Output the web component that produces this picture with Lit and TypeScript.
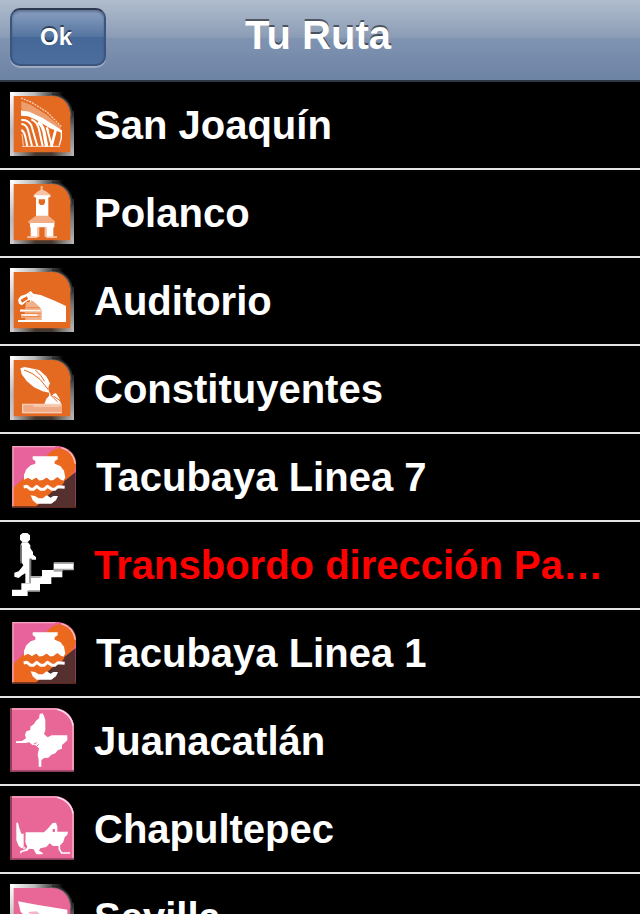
import { LitElement, html, css, svg, TemplateResult } from "lit";
import { customElement, state } from "lit/decorators.js";

type Stop = { name: string; icon: string; transfer?: boolean; wide?: boolean };

const STOPS: Stop[] = [
  { name: "San Joaquín", icon: "sanJoaquin" },
  { name: "Polanco", icon: "polanco" },
  { name: "Auditorio", icon: "auditorio" },
  { name: "Constituyentes", icon: "constituyentes" },
  { name: "Tacubaya Linea 7", icon: "tacubaya", wide: true },
  { name: "Transbordo dirección Pantitlán", icon: "stairs", transfer: true },
  { name: "Tacubaya Linea 1", icon: "tacubaya", wide: true },
  { name: "Juanacatlán", icon: "juanacatlan" },
  { name: "Chapultepec", icon: "chapultepec" },
  { name: "Sevilla", icon: "sevilla" },
];

/* Silver frame with one rounded corner, used by line 7 badges. */
const silverPlate = (fill: string) => svg`
  <path fill="url(#rim-right)" d="M206 80H222V216H206z"/>
  <path fill="url(#rim-base)" d="M30 203H222V216H30z"/>
  <path fill="url(#rim-top)" d="M30 24H190V38H30z"/>
  <path fill="url(#rim-side)" d="M30 24H42V216H30z"/>
  <path fill="none" stroke="#2a2a2a" stroke-width="10" d="M156 33C192 36 213 60 215 96"/>
  <path fill="none" stroke="#6a6460" stroke-width="4" d="M150 35C190 36 211 60 213 96"/>
  <path fill=${fill} d="M41 36H158C190 38 210 62 211 95V205H41z"/>`;

/* Flat pink plate with a light curved edge, used by line 1 badges. */
const pinkPlate = svg`
  <path fill="#e96797" d="M30 24H168C200 28 220 52 222 80V216H30z"/>
  <path fill="none" stroke="#f3a3c0" stroke-width="5" d="M36 27H166C198 31 217 54 219 80V212"/>
  <path fill="none" stroke="#fff" stroke-width="4" opacity=".7" d="M172 28C199 34 217 56 219 76"/>
  <path fill="#8c3f5e" d="M30 24H36V216H30zM30 211H222V216H30z"/>`;

const ICONS: Record<string, TemplateResult> = {
  sanJoaquin: svg`
    ${silverPlate("#e46a22")}
    <path fill="#fff" opacity=".35" d="M64 52L92 62L140 92L182 130V142L150 118L105 92L64 76z"/>
    <path fill="none" stroke="#fff" stroke-width="4" stroke-dasharray="6 3" opacity=".7" d="M63 42L95 55L142 85L186 130"/>
    <path fill="#fff" d="M63 79L88 83L128 102L160 122L184 138V146L150 133L108 107L84 97L63 95z"/>
    <g fill="none" stroke="#fff" stroke-width="6">
      <path d="M64 108Q84 106 94 124L112 186"/>
      <path d="M64 120Q78 120 84 138L96 186"/>
      <path d="M64 138Q72 142 76 158L82 186"/>
      <path d="M94 106Q110 112 116 132L128 186"/>
      <path stroke-width="10" d="M114 114Q128 124 132 144L140 188"/>
      <path d="M140 130L156 188"/>
      <path stroke-width="8" d="M168 134L154 188"/>
      <path stroke-width="4" d="M184 138V162L178 184"/>
      <path stroke-width="3" d="M66 187H180" opacity=".8"/>
      <path stroke-width="3" d="M146 134V150M66 150L70 184" opacity=".7"/>
    </g>`,
  polanco: svg`
    ${silverPlate("#e46a22")}
    <path fill="#f6c4a5" d="M122 42H128V53L138 58L152 69V76H101V69L114 58L122 53z"/>
    <path fill="#fff" d="M108 74H145V132H108zM104 70H149V76H104z"/>
    <path fill="#e46a22" d="M116 82H135V93L130 99H121L116 93z"/>
    <path fill="#f3ad86" d="M108 131H145L165 148V154H85V148z"/>
    <path fill="#fff" d="M90 153H163V166H160V195H139V166H113V195H92V166H90z"/>
    <path fill="#f6c4a5" d="M82 193H112V198H82zM139 193H171V198H139zM113 164H118V195H113zM134 164H139V195H134z"/>`,
  auditorio: svg`
    ${silverPlate("#e46a22")}
    <path fill="#fff" d="M54 119L62 108L78 103L92 93L100 101L122 105L166 123L198 138V186H54V180H124V150L104 128L92 119L82 122L66 136L57 131z"/>
    <path fill="#f3b18a" d="M78 127L98 124L112 134L124 148V180H76V174H64V163H74V156H60V147H76z"/>
    <path fill="#e46a22" d="M62 119L81 109L84 117L66 128z"/>
    <path fill="none" stroke="#e46a22" stroke-width="3" opacity=".6" d="M88 100L96 110M80 143H120M64 160H122M66 170H122"/>
    <path fill="none" stroke="#fff" stroke-width="4" d="M60 152H122M64 165H112M92 98V126"/>`,
  constituyentes: svg`
    ${silverPlate("#e46a22")}
    <path fill="#fff" d="M61 61L74 57L92 61L118 66L140 86L150 106L145 118L148 134L128 130L102 118L80 99L65 79z"/>
    <path fill="none" stroke="#e46a22" stroke-width="3" d="M72 66L96 76L120 94L146 126M106 66L122 82L134 100"/>
    <path fill="#fff" d="M148 131L155 145L161 137L168 136L178 151L183 168H133L139 152L147 144z"/>
    <path fill="none" stroke="#e46a22" stroke-width="3" d="M151 140L172 161M160 144L180 158"/>
    <path fill="#f0aa86" d="M66 168H186V196H66z"/>
    <path fill="none" stroke="#f7ceb6" stroke-width="4" d="M68 195V169H184M68 194H185M102 170V174H182"/>`,
  tacubaya: svg`
    <path fill="#e8629b" d="M37 30H176C204 34 224 52 228 76V214H37z"/>
    <path fill="#ec681f" d="M37 158L100 98L154 46C166 36 180 35 192 42C215 52 227 70 227 92C224 110 212 122 202 130L112 214H37z"/>
    <path fill="#56302f" d="M227 108V214H106L132 190L178 146L202 128z"/>
    <path fill="none" stroke="#f6a6c6" stroke-width="4" d="M39 212V32H166"/>
    <path fill="none" stroke="#fbc5a4" stroke-width="4" d="M184 35C208 42 222 58 226 84"/>
    <path fill="none" stroke="#5f2d24" stroke-width="4" d="M38 213H228"/>
    <path fill="#fff" d="M98 61H173V70L164 76V83L181 90L192 104L196 125L190 134L181 132L172 124L160 133L151 134L140 125L128 133L118 134L108 125L96 133L83 126L72 131V116L79 100L92 88L106 83V75L98 70z"/>
    <path fill="#ec681f" d="M76 132L84 126L96 133L108 125L118 134L128 133L140 125L151 134L160 133L172 124L184 132L194 137L184 151L172 148L160 158L142 148L128 159L108 148L94 158L76 149z"/>
    <path fill="none" stroke="#fff" stroke-width="9" stroke-linejoin="round" d="M71 153L81 151L92 160H100L110 151L122 160H132L142 151L156 160H164L174 152L194 154"/>
    <path fill="#fff" d="M92 178L105 180L116 187H128L140 178L152 185L160 180L174 180L168 193L154 203H110L98 193z"/>`,
  stairs: svg`
    <path fill="#fff" d="M68 27H82L90 34V47L82 55H68L60 47V34z"/>
    <path fill="#fff" d="M66 55H84L91 64V73L99 84V92L108 99V107H96L91 102V178H76V148L66 154L56 162L43 158V146L56 142L64 132L70 124L62 110V62z"/>
    <path fill="#777" d="M61 62H66V118H61zM88 104H94V176H88z"/>
    <path fill="#fff" d="M36 197H64V178H92V157H126V138H161V116H221V138H187V160H154V180H120V200H83V216H36z"/>
    <path fill="#aaa" d="M162 115H221V120H162zM161 134H221V139H187V143H161zM92 157H122V162H92zM84 198H120V203H84z"/>`,
  juanacatlan: svg`
    ${pinkPlate}
    <path fill="#fff" d="M119 42L128 40L132 48L136 60V91L132 102L143 112L155 106H202V121L194 128L186 135V146L174 150L166 160L154 164L145 173L132 174L124 181V200H116V180L113 164L117 145L106 136L96 134L88 127L76 129H48V124L66 123L78 115L75 104L79 94L91 90V80L102 72L108 62L117 55z"/>
    <path fill="none" stroke="#e96797" stroke-width="3" d="M102 132L110 128M109 140L116 133"/>`,
  chapultepec: svg`
    ${pinkPlate}
    <path fill="#fff" d="M49 104H54L58 120L64 137H71V178L65 181L56 174L49 157zM77 133H132L143 122L158 105L168 104L172 116V131H204L202 140L194 148L190 162L178 174H159L149 166L139 177L121 181L117 188L128 194V199H109L101 184L88 182L82 188L66 192L62 198L60 190L76 184L82 177L76 162z"/>
    <path fill="#e96797" d="M158 123H165V132H158z"/>
    <path fill="none" stroke="#fff" stroke-width="5" d="M178 168V184L185 195H210M75 178L70 182"/>`,
  sevilla: svg`
    ${silverPlate("#e96797")}
    <path fill="#fff" d="M54 76L110 86L202 101V128H190V196H170V134L128 124L108 150V196H90V132L62 108z"/>
    <path fill="#f5b3cc" d="M84 108L110 106L124 118L106 128z"/>`,
};

@customElement("app-root")
export class AppRoot extends LitElement {
  @state() private stops: Stop[] = STOPS;

  static styles = css`
    :host {
      display: block;
      height: 100vh;
      overflow: hidden;
      background: #000;
      color: #fff;
      font-family: "Liberation Sans", Arial, Helvetica, sans-serif;
      font-weight: bold;
    }
    .bar {
      box-sizing: border-box;
      height: 82px;
      padding: 8px 10px 0;
      display: grid;
      grid-template-columns: 1fr auto 1fr;
      align-items: start;
      border-bottom: 2px solid #2d3642;
      background: linear-gradient(#b1bdcd 0, #8a9cb5 38px, #8094b2 38px, #6d83a4 80px);
    }
    .ok {
      box-sizing: border-box;
      width: 96px;
      height: 58px;
      padding: 0 4px 0 0;
      border: 2px solid #3c557d;
      border-top-color: #2c3a50;
      border-radius: 10px;
      background: linear-gradient(#8a9fc0 0, #54749f 50%, #466899 50%, #4b6d9e 100%);
      box-shadow: 0 2px 0 rgba(255, 255, 255, 0.3), inset 0 2px 2px rgba(30, 45, 75, 0.35);
      color: inherit;
      font: inherit;
      font-size: 24px;
      line-height: 28px;
      text-shadow: 0 -2px 0 rgba(0, 0, 0, 0.5);
    }
    .title {
      margin: 0;
      padding-right: 4px;
      font-size: 40px;
      line-height: 54px;
      text-shadow: 0 -2px 0 rgba(0, 0, 0, 0.5);
    }
    .list {
      list-style: none;
      margin: 0;
      padding: 0;
    }
    .row {
      display: flex;
      align-items: center;
      gap: 20px;
      height: 84px;
      padding: 0 20px 2px 10px;
      border-bottom: 2px solid #e4e4e4;
    }
    .icon {
      flex: none;
      width: 64px;
      height: 64px;
    }
    .icon.wide {
      width: 66px;
    }
    .name {
      min-width: 0;
      padding-top: 2px;
      font-size: 40px;
      line-height: 48px;
      white-space: nowrap;
      overflow: hidden;
      text-overflow: ellipsis;
    }
    .transfer {
      color: #f00;
    }
    .defs {
      position: absolute;
    }
  `;

  render() {
    return html`
      <svg class="defs" width="0" height="0" aria-hidden="true">
        <defs>
          <linearGradient id="rim-top">
            <stop offset="0" stop-color="#fff" />
            <stop offset=".45" stop-color="#bbb" />
            <stop offset="1" stop-color="#000" />
          </linearGradient>
          <linearGradient id="rim-side" x2="0" y2="1">
            <stop offset="0" stop-color="#fff" />
            <stop offset=".6" stop-color="#bbb" />
            <stop offset="1" stop-color="#ccc" />
          </linearGradient>
          <linearGradient id="rim-right" x2="0" y2="1">
            <stop offset="0" stop-color="#222" />
            <stop offset=".4" stop-color="#777" />
            <stop offset="1" stop-color="#bbb" />
          </linearGradient>
          <linearGradient id="rim-base">
            <stop offset="0" stop-color="#ccc" />
            <stop offset=".4" stop-color="#443830" />
            <stop offset=".65" stop-color="#443830" />
            <stop offset="1" stop-color="#bbb" />
          </linearGradient>
        </defs>
      </svg>
      <header class="bar">
        <button class="ok" type="button">Ok</button>
        <h1 class="title">Tu Ruta</h1>
      </header>
      <ul class="list">
        ${this.stops.map(
          (stop) => html`
            <li class="row">
              <svg
                class="icon ${stop.wide ? "wide" : ""}"
                viewBox=${stop.wide ? "30 24 198 192" : "30 24 192 192"}
                aria-hidden="true"
              >
                ${ICONS[stop.icon]}
              </svg>
              <span class="name ${stop.transfer ? "transfer" : ""}">${stop.name}</span>
            </li>
          `
        )}
      </ul>
    `;
  }
}
